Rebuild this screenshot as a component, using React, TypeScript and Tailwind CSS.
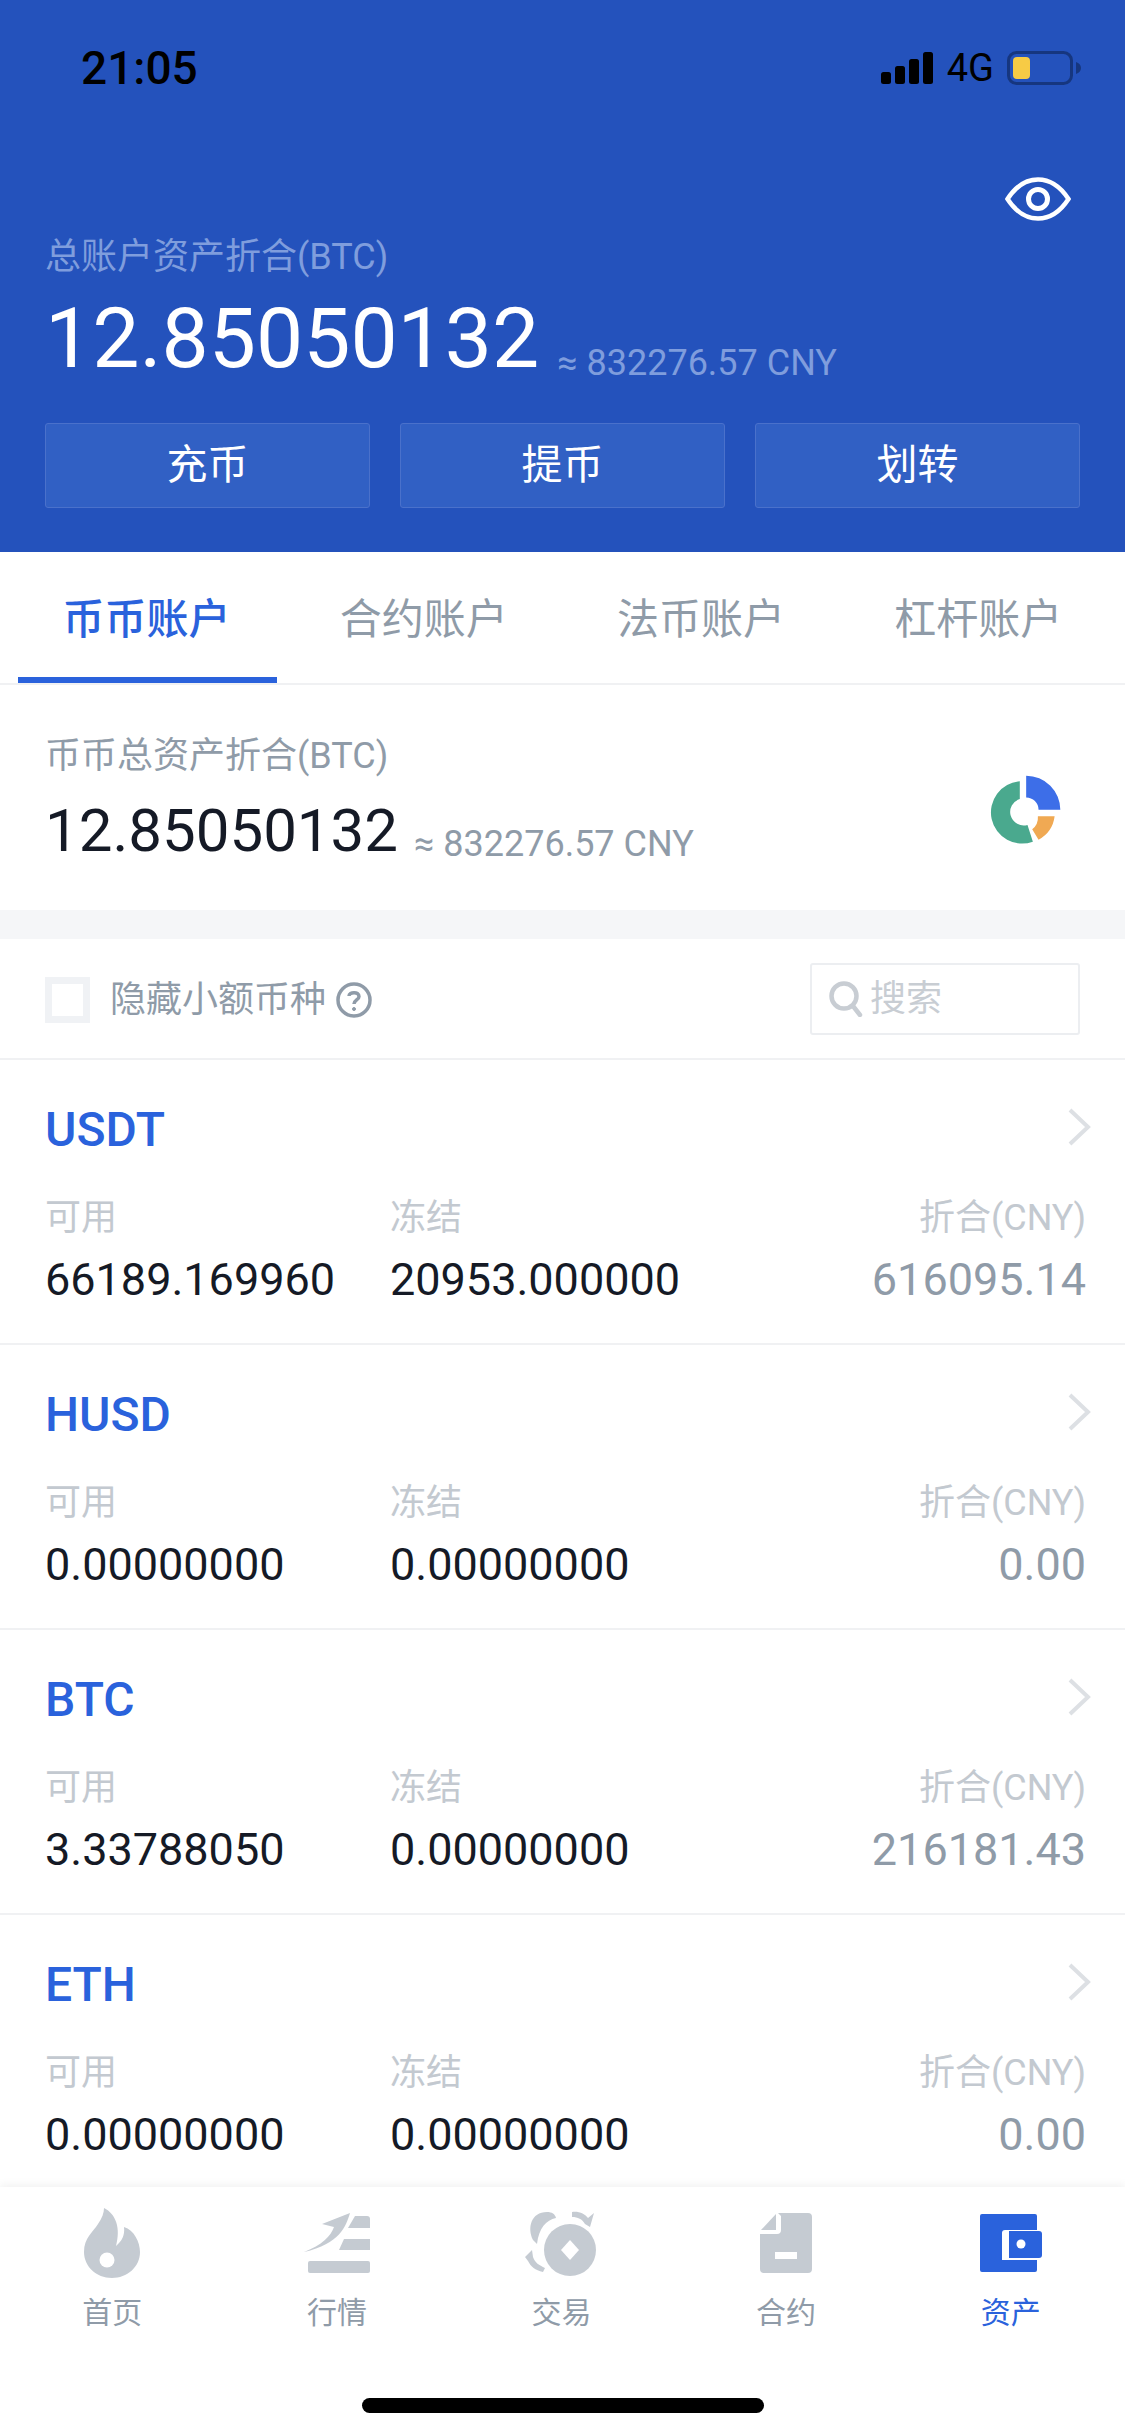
import React from 'react';

const font = { fontFamily: 'Roboto, "Noto Sans CJK SC", sans-serif' };

interface Coin {
  name: string;
  available: string;
  frozen: string;
  worth: string;
}

const coins: Coin[] = [
  { name: 'USDT', available: '66189.169960', frozen: '20953.000000', worth: '616095.14' },
  { name: 'HUSD', available: '0.00000000', frozen: '0.00000000', worth: '0.00' },
  { name: 'BTC', available: '3.33788050', frozen: '0.00000000', worth: '216181.43' },
  { name: 'ETH', available: '0.00000000', frozen: '0.00000000', worth: '0.00' },
];

function StatusBar() {
  return (
    <div className="flex h-[136px] items-center justify-between pl-[81px] pr-[44px]">
      <span className="text-[46px] font-medium leading-none text-black">21:05</span>
      <div className="flex items-center">
        <svg width="52" height="32" viewBox="0 0 52 32" fill="#000">
          <rect x="0" y="20" width="10" height="12" rx="2.5" />
          <rect x="14" y="14" width="10" height="18" rx="2.5" />
          <rect x="28" y="7" width="10" height="25" rx="2.5" />
          <rect x="42" y="0" width="10" height="32" rx="2.5" />
        </svg>
        <span className="ml-[14px] text-[38px] leading-none text-black">4G</span>
        <svg className="ml-[13px]" width="74" height="34" viewBox="0 0 74 34">
          <rect x="1.5" y="1.5" width="63" height="31" rx="8" fill="none" stroke="#16367f" strokeWidth="3" />
          <rect x="6" y="6" width="17" height="22" rx="4" fill="#f7cb45" />
          <path d="M69 11 C72 12 74 14 74 17 C74 20 72 22 69 23 Z" fill="#16367f" />
        </svg>
      </div>
    </div>
  );
}

function Header() {
  return (
    <div className="h-[552px] shrink-0 bg-[#2452bc]">
      <StatusBar />
      <div className="flex justify-end pr-[54px] pt-[41px]">
        <svg width="66" height="44" viewBox="0 0 66 44" fill="none" stroke="#fff">
          <path d="M2.5 22 C11 9 21 2.5 33 2.5 C45 2.5 55 9 63.5 22 C55 35 45 41.5 33 41.5 C21 41.5 11 35 2.5 22 Z" strokeWidth="4.5" />
          <circle cx="33" cy="22" r="9.5" strokeWidth="5" />
        </svg>
      </div>
      <div className="pl-[45px] pt-[12px] text-[36px] leading-[48px] text-[#7f9ddd]">总账户资产折合(BTC)</div>
      <div className="flex items-baseline pl-[45px] pt-[8px]">
        <span className="text-[84px] leading-[100px] text-white">12.85050132</span>
        <span className="ml-[18px] translate-y-[8px] text-[36px] text-[#7f9ddd]">≈ 832276.57 CNY</span>
      </div>
      <div className="mt-[34px] flex gap-[30px] px-[45px]">
        {['充币', '提币', '划转'].map((label) => (
          <div
            key={label}
            className="flex h-[85px] flex-1 items-center justify-center rounded-[3px] border border-[#4a71cb] bg-[#3160c4] text-[41px] text-white"
          >
            {label}
          </div>
        ))}
      </div>
    </div>
  );
}

function Tabs() {
  const tabs = ['币币账户', '合约账户', '法币账户', '杠杆账户'];
  return (
    <div className="flex h-[133px] shrink-0 border-b-2 border-[#f0f1f3] px-[8px]">
      {tabs.map((tab, i) => (
        <div key={tab} className="relative flex flex-1 items-center justify-center pt-[4px]">
          <span className={`text-[42px] ${i === 0 ? 'font-medium text-[#2a62dc]' : 'text-[#8f9ba8]'}`}>{tab}</span>
          {i === 0 && <div className="absolute bottom-0 left-[10px] right-[8px] h-[6px] bg-[#2a62dc]" />}
        </div>
      ))}
    </div>
  );
}

function DonutIcon() {
  return (
    <svg width="72" height="72" viewBox="120 100 215 215">
      <path d="M209 122 A93 93 0 1 0 248 302 L232 252 A40 40 0 1 1 209 175 Z" fill="#4aa98e" />
      <path d="M228 105 A102 102 0 0 1 330 207 H265 A37 37 0 0 0 228 170 Z" fill="#3d6ee8" />
      <path d="M313 226 A93 93 0 0 1 265 296 L246 265 A45 45 0 0 0 263 226 Z" fill="#f0a953" />
    </svg>
  );
}

function Summary() {
  return (
    <div className="flex h-[225px] shrink-0 items-start justify-between pl-[45px] pr-[63px]">
      <div>
        <div className="pt-[47px] text-[36px] leading-[48px] text-[#8f9ba8]">币币总资产折合(BTC)</div>
        <div className="flex items-baseline pt-[14px]">
          <span className="text-[60px] leading-[74px] text-[#151a26]">12.85050132</span>
          <span className="ml-[16px] translate-y-[5px] text-[36px] text-[#8f9ba8]">≈ 832276.57 CNY</span>
        </div>
      </div>
      <div className="pt-[89px]">
        <DonutIcon />
      </div>
    </div>
  );
}

function Filter() {
  return (
    <div className="flex h-[121px] shrink-0 items-center justify-between border-b-2 border-[#f0f1f3] pl-[45px] pr-[45px]">
      <div className="flex items-center pt-[2px]">
        <div className="h-[46px] w-[45px] border-[7px] border-[#f0f2f5] bg-white" />
        <span className="ml-[20px] text-[36px] leading-none text-[#8f9ba8]">隐藏小额币种</span>
        <svg className="ml-[10px]" width="36" height="36" viewBox="0 0 36 36" fill="none" stroke="#8f9ba8">
          <circle cx="18" cy="18" r="16" strokeWidth="3.5" />
          <path d="M13 14 C13 10 23 9 23 14.5 C23 18 18 18 18 22" strokeWidth="3.5" />
          <circle cx="18" cy="27" r="1.5" fill="#8f9ba8" />
        </svg>
      </div>
      <div className="flex h-[72px] w-[270px] items-center rounded-[3px] border-2 border-[#eceef1] pl-[17px]">
        <svg width="34" height="36" viewBox="0 0 34 36" fill="none" stroke="#c8cdd3" strokeWidth="4.5">
          <circle cx="15" cy="15" r="12.5" />
          <path d="M24 25 L31 34" strokeLinecap="round" />
        </svg>
        <span className="ml-[7px] text-[36px] leading-none text-[#c8cdd3]">搜索</span>
      </div>
    </div>
  );
}

function CoinRow({ coin }: { coin: Coin }) {
  return (
    <div className="relative h-[285px] shrink-0 border-b-2 border-[#f0f1f3] px-[45px]">
      <div className="flex items-center justify-between pt-[43px]">
        <span className="text-[48px] font-medium leading-[54px] text-[#2a62dc]">{coin.name}</span>
        <svg className="-mr-[11px] -mt-[7px]" width="24" height="38" viewBox="0 0 24 38" fill="none" stroke="#dde0e4" strokeWidth="4">
          <path d="M3 2 L21 19 L3 36" />
        </svg>
      </div>
      <div className="flex pt-[37px]">
        <div className="w-[345px]">
          <div className="text-[36px] leading-[48px] text-[#c3c9d0]">可用</div>
          <div className="pt-[12px] text-[45px] leading-[52px] text-[#151a26]">{coin.available}</div>
        </div>
        <div className="flex-1">
          <div className="text-[36px] leading-[48px] text-[#c3c9d0]">冻结</div>
          <div className="pt-[12px] text-[45px] leading-[52px] text-[#151a26]">{coin.frozen}</div>
        </div>
        <div className="-mr-[6px] text-right">
          <div className="text-[36px] leading-[48px] text-[#c3c9d0]">折合(CNY)</div>
          <div className="pt-[12px] text-[45px] leading-[52px] text-[#8f9ba8]">{coin.worth}</div>
        </div>
      </div>
    </div>
  );
}

const iconGray = '#c5cbd2';

function FlameIcon() {
  return (
    <svg width="56" height="70" viewBox="0 0 56 70">
      <path
        d="M20 0 C32 6 37 20 32 38 C38 33 41 27 40 19 C50 22 56 34 56 44 C56 59 43 70 28 70 C12 70 0 58 0 44 C0 30 9 24 14 16 C18 10 20 5 20 0 Z"
        fill={iconGray}
      />
      <circle cx="23" cy="52" r="7.5" fill="#fff" />
    </svg>
  );
}

function MarketIcon() {
  return (
    <svg width="66" height="62" viewBox="0 0 66 62" fill={iconGray}>
      <rect x="4" y="49" width="62" height="12" rx="2" />
      <path d="M40 27 H66 V38 H35 Z" />
      <path d="M51 4 H63 Q66 4 66 7 V16 H44 Z" />
      <path d="M46 1 C42 14 36 32 0 40 C18 33 27 24 30 15 L18 12 Z" />
    </svg>
  );
}

function TradeIcon() {
  return (
    <svg width="72" height="66" viewBox="0 0 72 66" fill={iconGray}>
      <path d="M8 30 C2 18 6 2 22 2 C27 2 30 4 31 8 C21 10 14 18 12 34 Z" />
      <circle cx="45" cy="40" r="26" />
      <path d="M45 30 L54 40 L45 50 L36 40 Z" fill="#fff" />
      <path d="M47 2 C54 1 60 4 63 8 L69 3 L65 17 L60 14 C57 9 53 7 47 7 Z" />
      <path d="M0 47 L7 40 L8 47 C10 53 14 55 20 58 L18 62 C10 60 6 57 3 51 Z" />
    </svg>
  );
}

function ContractIcon() {
  return (
    <svg width="52" height="60" viewBox="0 0 52 60" fill={iconGray}>
      <path d="M18 0 H48 Q52 0 52 4 V56 Q52 60 48 60 H4 Q0 60 0 56 V21 H17 Q21 21 21 17 V3 Z" />
      <path d="M16 1 V17 H1 Z" />
      <rect x="15" y="39" width="22" height="7" fill="#fff" />
    </svg>
  );
}

function WalletIcon() {
  return (
    <svg width="62" height="58" viewBox="0 0 62 58" fill="#2a62dc">
      <path d="M2 0 H55 Q57 0 57 2 V16 H25 Q22 16 22 19 V46 H57 V56 Q57 58 55 58 H2 Q0 58 0 56 V2 Q0 0 2 0 Z" />
      <path d="M29 17 H59 Q62 17 62 20 V41 Q62 44 59 44 H29 Z" />
      <circle cx="41" cy="30" r="4.5" fill="#fff" />
    </svg>
  );
}

function BottomNav() {
  const items = [
    { label: '首页', icon: <FlameIcon /> },
    { label: '行情', icon: <MarketIcon /> },
    { label: '交易', icon: <TradeIcon /> },
    { label: '合约', icon: <ContractIcon /> },
    { label: '资产', icon: <WalletIcon />, active: true },
  ];
  return (
    <div className="relative flex h-[249px] shrink-0 flex-col bg-white shadow-[0_-3px_8px_rgba(0,0,0,0.05)]">
      <div className="flex pr-[2px] pt-[20px]">
        {items.map((item) => (
          <div key={item.label} className="flex flex-1 flex-col items-center">
            <div className="flex h-[72px] items-center">{item.icon}</div>
            <span className={`pt-[16px] text-[30px] leading-[36px] ${item.active ? 'text-[#2a62dc]' : 'text-[#8f9ba8]'}`}>
              {item.label}
            </span>
          </div>
        ))}
      </div>
      <div className="absolute bottom-[23px] left-[362px] h-[15px] w-[402px] rounded-full bg-black" />
    </div>
  );
}

export default function App() {
  return (
    <div className="flex h-[2436px] w-[1125px] flex-col overflow-hidden bg-white" style={font}>
      <Header />
      <Tabs />
      <Summary />
      <div className="h-[29px] shrink-0 bg-[#f5f6f8]" />
      <Filter />
      <div className="flex min-h-0 flex-1 flex-col overflow-hidden">
        {coins.map((coin) => (
          <CoinRow key={coin.name} coin={coin} />
        ))}
      </div>
      <BottomNav />
    </div>
  );
}
